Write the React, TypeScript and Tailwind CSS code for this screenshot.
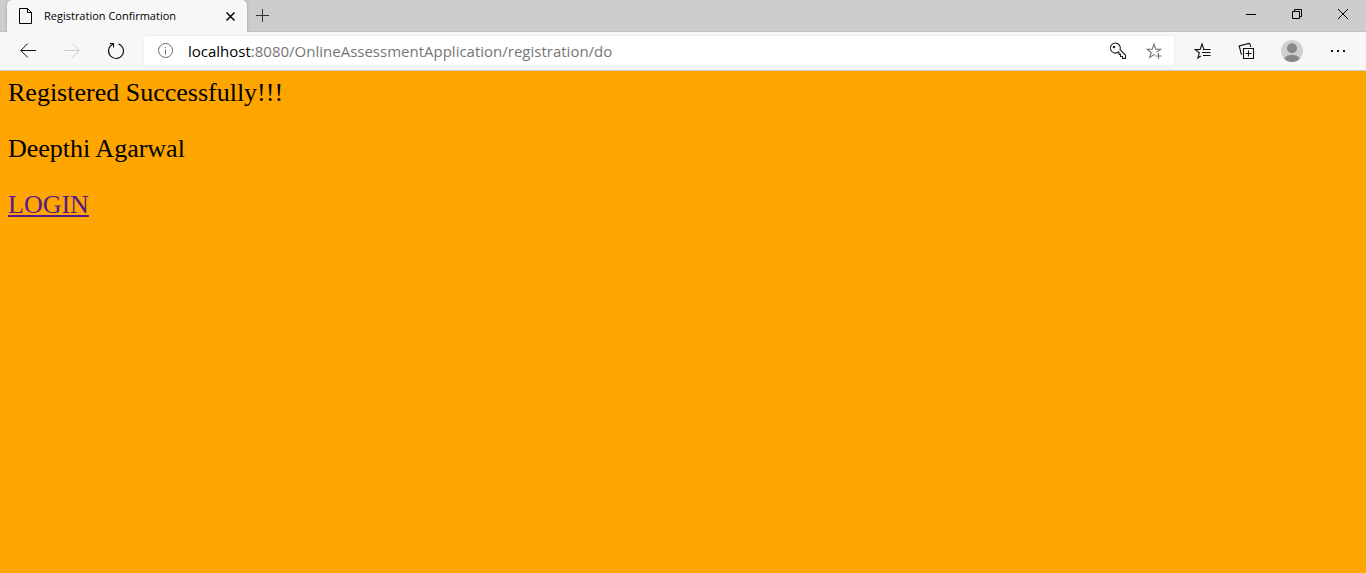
import type { ReactNode } from "react";

type IconButtonProps = {
  label: string;
  className: string;
  children: ReactNode;
  disabled?: boolean;
};

function IconButton({ label, className, children, disabled }: IconButtonProps) {
  return (
    <button
      type="button"
      aria-label={label}
      disabled={disabled}
      className={`flex shrink-0 items-center justify-center ${className}`}
    >
      {children}
    </button>
  );
}

type GlyphProps = { size?: number; width?: number; children: ReactNode };

function Glyph({ size = 18, width = 1, children }: GlyphProps) {
  return (
    <svg
      width={size}
      height={size}
      viewBox={`0 0 ${size} ${size}`}
      fill="none"
      stroke="currentColor"
      strokeWidth={width}
      aria-hidden="true"
      className="shrink-0"
    >
      {children}
    </svg>
  );
}

function TabStrip() {
  return (
    <header className="flex h-8 items-stretch bg-[#cdcdcd] pl-[7px] shadow-[inset_0_-1px_0_#c2c2c2]">
      <div className="flex w-60 items-center rounded-t-[5px] bg-[#f7f7f7] pr-2 pl-[10px] shadow-[0_0_3px_rgba(0,0,0,0.25)]">
        <Glyph>
          <path d="M2.5 1.5h8l4 4v11h-12z M10.5 1.5v4h4" />
        </Glyph>
        <span className="ml-[9px] flex-1 whitespace-nowrap font-['Open_Sans',sans-serif] text-[11px] leading-4 text-black">
          Registration Confirmation
        </span>
        <IconButton label="Close tab" className="size-4">
          <Glyph size={16} width={1.5}>
            <path d="M3.5 4.5l8 8M11.5 4.5l-8 8" />
          </Glyph>
        </IconButton>
      </div>
      <IconButton label="New tab" className="w-8 text-[#333]">
        <Glyph>
          <path d="M8.5 2v13M2 8.5h13" />
        </Glyph>
      </IconButton>
      <div className="ml-auto flex h-[30px] text-black">
        <IconButton label="Minimize" className="w-[46px]">
          <Glyph size={16}>
            <path d="M3 7.5h10" />
          </Glyph>
        </IconButton>
        <IconButton label="Restore" className="w-[46px]">
          <Glyph size={16}>
            <path d="M3.5 4.5h7v7h-7z M5.5 4.5v-2h7v7h-2" />
          </Glyph>
        </IconButton>
        <IconButton label="Close window" className="w-[46px]">
          <Glyph size={16}>
            <path d="M3 2l10 10M13 2l-10 10" />
          </Glyph>
        </IconButton>
      </div>
    </header>
  );
}

function AddressBar() {
  return (
    <div className="ml-[6px] flex h-[30px] min-w-0 flex-1 items-center rounded-[3px] bg-white shadow-[0_0_3px_rgba(0,0,0,0.08)]">
      <IconButton label="Site information" className="w-11 text-[#6b6b6b]">
        <Glyph>
          <circle cx="8.5" cy="8.5" r="7" />
          <path d="M8.5 7.5v5M8.5 5v1" />
        </Glyph>
      </IconButton>
      <span className="min-w-0 flex-1 truncate font-['Open_Sans',sans-serif] text-[15px] leading-5 text-[#767676]">
        <span className="text-black">localhost</span>
        :8080/OnlineAssessmentApplication/registration/do
      </span>
      <IconButton label="Saved passwords" className="w-9 text-[#1a1a1a]">
        <Glyph width={1.1}>
          <path d="M9.7 9.8a5 5 0 1 1 1.4-2.1l5.4 5.4v3.4h-3v-2h-2v-2.1h-1.3z" />
          <circle cx="5" cy="5" r="0.7" fill="currentColor" />
        </Glyph>
      </IconButton>
      <IconButton label="Add to favorites" className="mr-[2px] w-9 text-[#747474]">
        <Glyph width={1.1}>
          <path d="M11.5 10.4l4.2-3.2h-4.9L9 2.2 7.2 7.2H2.2l4 3.3-1.5 5L9 12.6l.8.5M13.5 11v6M10.5 14h6" />
        </Glyph>
      </IconButton>
    </div>
  );
}

function Toolbar() {
  return (
    <nav className="flex h-[39px] items-center border-b border-[#cbcbcb] bg-[#f7f7f7] pr-[5px] pl-[6px] text-[#111]">
      <IconButton label="Back" className="h-8 w-11">
        <Glyph>
          <path d="M17 8.5H2M8.8 1.5l-7 7 7 7" />
        </Glyph>
      </IconButton>
      <IconButton label="Forward" className="h-8 w-11 text-[#cdcdcd]" disabled>
        <Glyph>
          <path d="M1 8.5h15M9.2 1.5l7 7-7 7" />
        </Glyph>
      </IconButton>
      <IconButton label="Refresh" className="h-8 w-11">
        <Glyph width={1.1}>
          <path d="M11.5 1.9a7.5 7.5 0 1 1-5.5.2M2.8 1.5h3.7v4" />
        </Glyph>
      </IconButton>
      <AddressBar />
      <IconButton label="Favorites" className="ml-[7px] h-8 w-11">
        <Glyph width={1.1}>
          <path d="M6.8 14l-2.9 2 1.4-5.2-4-3.3h4.8L8 2l1.7 4.9M9 7.5h7.5M8 10.5h8.5M9 13.5h7.5" />
        </Glyph>
      </IconButton>
      <IconButton label="Collections" className="h-8 w-11">
        <Glyph width={1.1}>
          <path d="M5.5 6.5h10v10h-10zM10.5 8.5v6M7.5 11.5h6M4 12.5l-.8-.5L1.2 4l9.8-2.6 1 .6.7 3" />
        </Glyph>
      </IconButton>
      <IconButton label="Profile" className="h-8 w-[46px]">
        <svg width="22" height="22" viewBox="0 0 22 22" aria-hidden="true">
          <defs>
            <clipPath id="avatar-clip">
              <circle cx="11" cy="11" r="11" />
            </clipPath>
          </defs>
          <g clipPath="url(#avatar-clip)">
            <rect width="22" height="22" fill="#d2d0ce" />
            <circle cx="11" cy="8.2" r="5" fill="#8a8886" />
            <ellipse cx="11" cy="20" rx="8" ry="5.3" fill="#8a8886" />
          </g>
        </svg>
      </IconButton>
      <IconButton label="Settings and more" className="h-8 w-[46px]">
        <Glyph>
          <path d="M2 8h2v2H2zM8 8h2v2H8zM14 8h2v2h-2z" fill="currentColor" stroke="none" />
        </Glyph>
      </IconButton>
    </nav>
  );
}

export default function App() {
  return (
    <div className="flex min-h-screen flex-col bg-[#ffa500]">
      <TabStrip />
      <Toolbar />
      <main className="flex flex-1 flex-col items-start gap-7 p-2 font-['Liberation_Serif',serif] text-[26px] leading-7 text-black">
        <p>Registered Successfully!!!</p>
        <p>Deepthi Agarwal</p>
        <a href="#login" className="text-[#551a8b] underline">
          LOGIN
        </a>
      </main>
    </div>
  );
}
